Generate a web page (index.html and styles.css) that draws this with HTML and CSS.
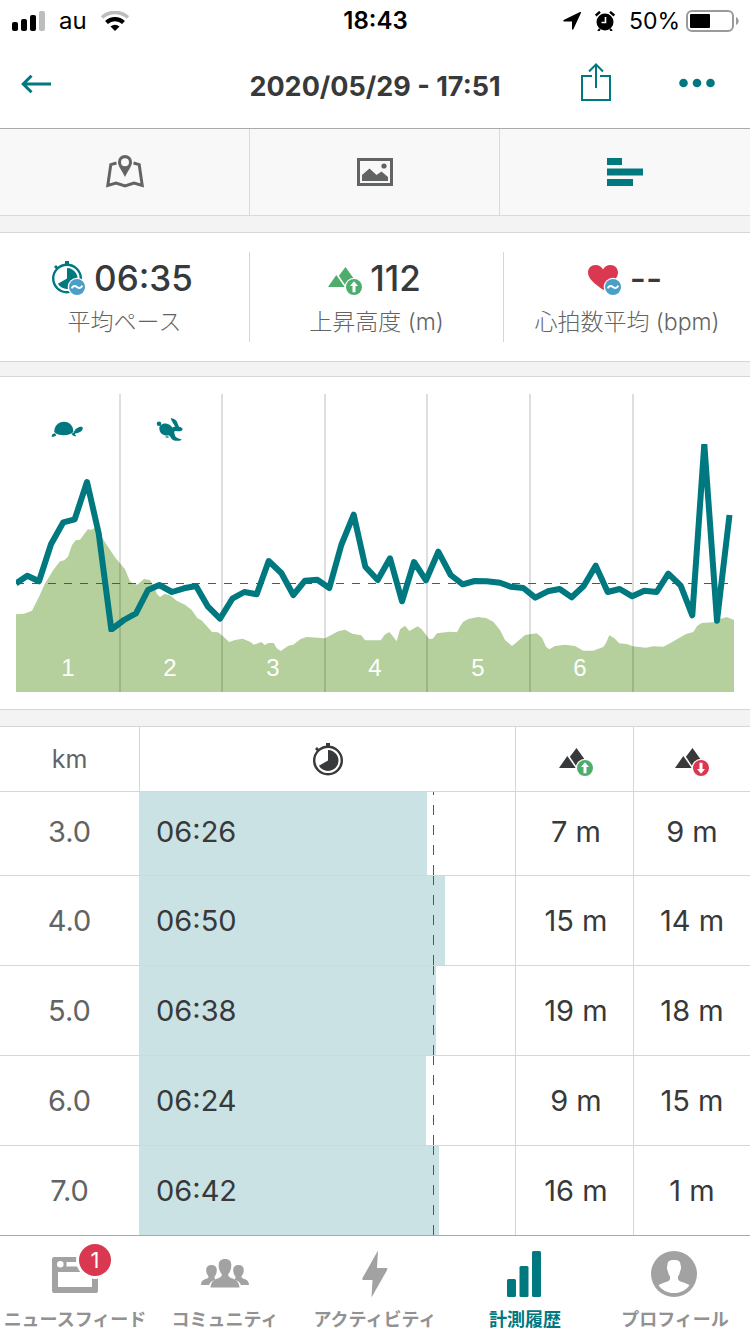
FILE: index.html
```
<!DOCTYPE html>
<html lang="ja">
  <head>
    <meta charset="UTF-8" />
    <meta name="viewport" content="width=device-width, initial-scale=1.0" />
    <title>計測履歴</title>
    <link rel="stylesheet" href="styles.css">
  </head>
  <body>
    <!-- shared icons -->
    <svg class="sprite" aria-hidden="true">
      <symbol id="stopwatch" viewBox="0 0 34 34">
        <path d="M13 0h4v4h-4zM2 6l2-2 3 3-2 2z" fill="currentColor" />
        <circle cx="15" cy="17.500" r="13.800" fill="none" stroke="currentColor" stroke-width="2.400" />
        <path d="M15 17.500V7A10.500 10.500 0 1 1 5.900 22.750z" fill="currentColor" />
      </symbol>
      <symbol id="mountains" viewBox="0 0 34 34">
        <path d="M0 26L8.300 14l8.400 12zM17.500 6l-6.600 8.800L18.500 26l9-6z" fill="currentColor" />
      </symbol>
      <symbol id="badge-avg" viewBox="0 0 34 34">
        <circle cx="25" cy="26" r="9.300" fill="#fff" />
        <circle cx="25" cy="26" r="8" fill="#4a9fc9" />
        <path d="M19.700 27.300c1.500-3.200 3.700-2.700 5.300-1.300s3.800 1.900 5.300-1.300" fill="none" stroke="#fff" stroke-width="2" />
      </symbol>
      <symbol id="badge-up" viewBox="0 0 34 34">
        <circle cx="26" cy="26" r="9.300" fill="#fff" />
        <circle cx="26" cy="26" r="8" fill="#4fad6c" />
        <path d="M26 20.300l4 4.700h-2.500v6.300h-3V25H22z" fill="#fff" />
      </symbol>
      <symbol id="badge-down" viewBox="0 0 34 34">
        <circle cx="26" cy="26" r="9.300" fill="#fff" />
        <circle cx="26" cy="26" r="8" fill="#da3850" />
        <path d="M26 31.700l4-4.700h-2.500v-6.300h-3V27H22z" fill="#fff" />
      </symbol>
    </svg>

    <div class="status-bar">
      <div class="status-left">
        <svg width="33" height="20" viewBox="0 0 33 20" aria-hidden="true">
          <rect x="0" y="11" width="6" height="9" rx="2" />
          <rect x="9" y="8" width="6" height="12" rx="2" />
          <rect x="18" y="4" width="6" height="16" rx="2" />
          <rect x="27" y="0" width="6" height="20" rx="2" fill="#bdbdbd" />
        </svg>
        <span>au</span>
        <svg width="28" height="20" viewBox="0 0 28 20" aria-hidden="true">
          <path d="M1 6.500A19 19 0 0 1 27 6.500" fill="none" stroke="#bdbdbd" stroke-width="3.600" />
          <path d="M5.500 11.500a12.500 12.500 0 0 1 17 0" fill="none" stroke="#000" stroke-width="4.200" />
          <path d="M14 20l-4.500-4.500a6.500 6.500 0 0 1 9 0z" />
        </svg>
      </div>
      <div class="status-time">18:43</div>
      <div class="status-right">
        <svg width="18" height="18" viewBox="0 0 18 18" aria-hidden="true">
          <path d="M17.300.700L1 8.700h8.700v8.300z" stroke="#000" stroke-width="1.400" stroke-linejoin="round" />
        </svg>
        <svg width="20" height="20" viewBox="0 0 20 20" aria-hidden="true">
          <circle cx="10" cy="11" r="8.500" />
          <path d="M.7 4.500L5 .800M19.300 4.500L15 .800" stroke="#000" stroke-width="2.400" />
          <path d="M15 18l2 2M5 18l-2 2" stroke="#000" stroke-width="2" />
          <path d="M10.500 6v5.500H6.500" fill="none" stroke="#fff" stroke-width="1.600" />
        </svg>
        <span class="battery-level">50%</span>
        <svg width="53" height="22" viewBox="0 0 53 22" aria-hidden="true">
          <rect x="1" y="1" width="46" height="20" rx="5" fill="none" stroke="#9a9a9a" stroke-width="2" />
          <rect x="4" y="4" width="20" height="14" rx="1" />
          <path d="M50 7c3.500 1.500 3.500 6.500 0 8z" fill="#9a9a9a" />
        </svg>
      </div>
    </div>

    <header class="header">
      <button class="icon-button" aria-label="戻る">
        <svg width="32" height="20" viewBox="0 0 32 20">
          <path d="M30 10H3M10.500 1.700L2.200 10l8.300 8.300" fill="none" stroke="currentColor" stroke-width="3" />
        </svg>
      </button>
      <h1>2020/05/29 - 17:51</h1>
      <div class="header-actions">
        <button class="icon-button" aria-label="共有">
          <svg width="30" height="38" viewBox="0 0 30 38">
            <path d="M11 13H1v24h28V13H19M15 25V2M8 8.500L15 1.500l7 7" fill="none" stroke="currentColor" stroke-width="2" />
          </svg>
        </button>
        <button class="icon-button" aria-label="メニュー">
          <svg width="36" height="38" viewBox="0 0 36 38">
            <g fill="currentColor">
              <circle cx="4.500" cy="20" r="4.300" />
              <circle cx="18" cy="20" r="4.300" />
              <circle cx="31.500" cy="20" r="4.300" />
            </g>
          </svg>
        </button>
      </div>
    </header>

    <nav class="view-tabs">
      <button class="view-tab" aria-label="地図">
        <svg width="38" height="34" viewBox="0 0 38 34">
          <path d="M10.500 8L4.800 9.600 1.800 30.400 10 28l9 3 9-3 8.200 2.400-3-20.800L27.500 8" fill="none" stroke="currentColor" stroke-width="3" />
          <path d="M19 0a7 7 0 0 1 7 7.200C26 11 22 15.500 19 22 16 15.500 12 11 12 7.200A7 7 0 0 1 19 0zm0 3.300a4 4 0 1 0 0 8 4 4 0 0 0 0-8z" fill="currentColor" fill-rule="evenodd" />
        </svg>
      </button>
      <button class="view-tab" aria-label="写真">
        <svg width="36" height="28" viewBox="0 0 36 28">
          <path d="M0 0h36v28H0zM3 3v22h30V3z" fill="currentColor" fill-rule="evenodd" />
          <path d="M5 23v-6l7.500-6.500 7 6.500 5-3.500 6.500 5.500v4z" fill="currentColor" />
          <circle cx="27" cy="8" r="2.600" fill="currentColor" />
        </svg>
      </button>
      <button class="view-tab active" aria-label="グラフ">
        <svg width="36" height="28" viewBox="0 0 36 28">
          <path d="M0 0h15v7H0zM0 10.500h36v7H0zM0 21h26v7H0z" fill="currentColor" />
        </svg>
      </button>
    </nav>

    <main>
      <section class="panel stats">
        <div class="stat">
          <div class="stat-value">
            <svg class="stat-icon teal" aria-hidden="true"><use href="#stopwatch" /><use href="#badge-avg" /></svg>
            06:35
          </div>
          <div class="stat-label">平均ペース</div>
        </div>
        <div class="stat">
          <div class="stat-value">
            <svg class="stat-icon green" aria-hidden="true"><use href="#mountains" /><use href="#badge-up" /></svg>
            112
          </div>
          <div class="stat-label">上昇高度 (m)</div>
        </div>
        <div class="stat">
          <div class="stat-value">
            <svg class="stat-icon" viewBox="0 0 34 34" aria-hidden="true">
              <path d="M15.500 29C6 22.500 0 17.500 0 11.500 0 7 3.300 4 7.500 4c3.500 0 6.300 1.800 7.500 4.500C16.200 5.800 19 4 22.500 4 26.700 4 30 7 30 11.500c0 6-6 11-14.500 17.500z" fill="#da3850" />
              <use href="#badge-avg" />
            </svg>
            --
          </div>
          <div class="stat-label">心拍数平均 (bpm)</div>
        </div>
      </section>

      <section class="panel chart">
        <svg viewBox="16 394 718 298" role="img" aria-label="ペースと高度">
          <clipPath id="plot"><rect x="16" y="444" width="718" height="188" /></clipPath>
          <path class="elevation" d="M16 692V614.300L24 613.700 32 610.700 39 596.700 44.700 584 53.300 570 60 561.300 64.300 560.300 68 556.700 72 545 75.700 540.300 80 539.700 88 529 90.700 530 94.700 528 98.700 531.700 105.300 542.700 115 557.300 125 569.300 130 581.300 133 583.500 137.300 584.700 144 579 150 580 154 586.700 157 594 160 597 165 593.700 170.700 595.700 176.700 600.700 185 604.700 191.700 610 197.300 618 202 620.700 212 632 218 632.300 222.700 636 229.300 642 235 640 242.700 638.700 250 641.700 254 644.700 261.300 642 264.700 645 268.700 643 273.700 643 276.700 648.300 280.700 651 288.300 645.700 293.300 644.700 300.700 639 306.700 637 325 638.300 338.300 631.300 345 629.700 352.300 633.700 361.300 635.300 365 640.300 380.700 640.300 384.700 634.700 389.300 632 393.300 636.700 396.700 641.300 400 629.300 405 625.700 409.300 631 417.700 626.300 421.700 629.300 429.300 639 432.700 638.700 437 633.300 450 631.700 457 632.300 460 626.500 463.300 621.700 468.300 619 477.700 617 486 618 493.300 621.700 500 630 505 640 512 646 516 642.700 525 635 536.700 633.300 542 637.700 546 646.700 549.300 649.300 555 646 565 644.700 575 646 583.300 650.700 593.300 650.700 603.300 647 606 643 609.300 635.300 614 638 619.300 643.300 627.700 644.300 632.700 646.300 645.700 647.700 653.300 646.300 663.300 646.700 670 643.300 686 634 693.300 632 697.300 625.700 701.700 623 716.700 622 720 619 726.700 617 734 620V692z" />
          <path class="split-lines" d="M120 394V692M222 394V692M325 394V692M427 394V692M530 394V692M633 394V692" />
          <path class="average" d="M16 583.500H728" />
          <polyline class="pace" clip-path="url(#plot)" points="16,583.500 27.300,575.700 39,581.300 51,544.300 63.300,522.300 74.700,519.300 87,482 98.700,533.300 111.300,629.500 124,620 136,613.300 148,590 159.300,585 172,592 184,588.300 196,586 208,606.700 220,618.700 232.300,598.700 244.300,592 256.700,594.300 268.700,561 281.300,573 293.300,595 305,580.700 317.300,579.700 329.300,588 341.300,545 353.700,514.700 365.300,566.700 377.700,580 390,558.300 402,601.300 414,562 426,580.300 438.300,551.700 450.700,575 462.700,584.300 474.700,581 486.700,581.300 500,582.700 510.700,586.700 523.300,588 535.300,597.700 547.700,591.300 559.700,589 571.700,597.300 583.700,586 595.700,565.700 607.700,592 619.700,589 632.300,596.300 644.300,590.700 656.700,592 668.300,573.700 680.700,585.700 692.300,615.300 704.300,444 717,620.700 729.500,515" />
          <!-- slowest split -->
          <g class="animal">
            <path d="M54.300 432c-.3-5.500 4-10.300 9.700-10.300s9.500 4.500 9.300 10.300c-2 2-5 3.200-9.300 3.200s-7.700-1-9.700-3.200z" />
            <path d="M73.500 432.700c1-2 2.200-4 3.800-4.700 2-1 3.700-1.600 5-1 .8 1.200.4 2.200 0 3-1 1.500-2 2-3 2.300-1.200.6-2.200.8-3.300 1-.9.300-1 .6-1.300 1l1.600 1.800c-1.500.5-2.500-.2-3.600-.8l-1.400-1.600zM51.700 436.700c-.2-1.700.7-3.100 3.300-3.400l1.300 2c-.9 1-2.800 1.900-4.600 1.400z" />
          </g>
          <!-- fastest split -->
          <g class="animal">
            <circle cx="159" cy="423.700" r="2.300" />
            <path d="M159.300 428c.4-3.500 4.200-5 7.700-4.300 4 1 5.300 3.800 6.600 6.500 1.200 2.600.8 5.300 2 6.500 1.500 1.500 4.500 2 6.200 2.800l-2 1.200c-2.500.2-5 .2-6.800-.7-1.700-1.200-2.800-3.500-4-4.700-4.500.8-9.700-1-9.700-7.300z" />
            <path d="M170.700 418c2.500.3 4.500 1.500 6 3.300l2.300 5.400c2 .3 3.500 1.300 3.700 2.600-.5 1.300-1.500 1.900-2.700 2-1.800.2-3.500-.5-5-.3l-1.700 1.700-1.700-4.900 3.500-1.300c-1.300-2.500-3.800-5.500-4.400-8.500zM165 437c1-1 3-1 4.200 0-1 1-3 1-4.200 0z" />
          </g>
          <g class="split-numbers">
            <text x="68" y="676">1</text>
            <text x="170" y="676">2</text>
            <text x="273" y="676">3</text>
            <text x="375" y="676">4</text>
            <text x="478" y="676">5</text>
            <text x="580" y="676">6</text>
          </g>
        </svg>
      </section>

      <table class="splits">
        <colgroup>
          <col class="col-distance" />
          <col />
          <col class="col-up" />
          <col class="col-down" />
        </colgroup>
        <thead>
          <tr>
            <th>km</th>
            <th aria-label="ペース"><svg class="stat-icon" viewBox="-2 -1 34 34" aria-hidden="true"><use href="#stopwatch" width="34" height="34" /></svg></th>
            <th aria-label="上昇"><svg class="stat-icon" aria-hidden="true"><use href="#mountains" /><use href="#badge-up" /></svg></th>
            <th aria-label="下降"><svg class="stat-icon" aria-hidden="true"><use href="#mountains" /><use href="#badge-down" /></svg></th>
          </tr>
        </thead>
        <tbody>
          <tr>
            <td>3.0</td>
            <td class="pace-cell"><div class="bar" style="width: 76.6%">06:26</div></td>
            <td>7 m</td>
            <td>9 m</td>
          </tr>
          <tr>
            <td>4.0</td>
            <td class="pace-cell"><div class="bar" style="width: 81.4%">06:50</div></td>
            <td>15 m</td>
            <td>14 m</td>
          </tr>
          <tr>
            <td>5.0</td>
            <td class="pace-cell"><div class="bar" style="width: 79%">06:38</div></td>
            <td>19 m</td>
            <td>18 m</td>
          </tr>
          <tr>
            <td>6.0</td>
            <td class="pace-cell"><div class="bar" style="width: 76.2%">06:24</div></td>
            <td>9 m</td>
            <td>15 m</td>
          </tr>
          <tr>
            <td>7.0</td>
            <td class="pace-cell"><div class="bar" style="width: 79.8%">06:42</div></td>
            <td>16 m</td>
            <td>1 m</td>
          </tr>
        </tbody>
      </table>
    </main>

    <nav class="tab-bar">
      <a href="#feed">
        <span class="tab-icon">
          <svg width="48" height="48" viewBox="0 0 48 48" aria-hidden="true">
            <path d="M3 7h42a2 2 0 0 1 2 2v32a2 2 0 0 1-2 2H3a2 2 0 0 1-2-2V9a2 2 0 0 1 2-2zm4 15v15h34V22zM9.300 11a3.300 3.300 0 1 0 0 6.600 3.300 3.300 0 0 0 0-6.600zM15.500 12v4.500H30V12z" fill="currentColor" fill-rule="evenodd" />
            <circle cx="44" cy="10" r="19" fill="#fff" />
          </svg>
          <span class="count">1</span>
        </span>
        ニュースフィード
      </a>
      <a href="#community">
        <span class="tab-icon">
          <svg width="48" height="48" viewBox="0 0 48 48" aria-hidden="true">
            <path d="M24 9c4.200 0 6.300 2.200 6.300 6 0 3.500-1 7-3 9-.4 2 .5 3 2.700 4 4 1.300 8 3 8.500 9.500h-29C10 31 14 29.300 18 28c2.200-1 3.100-2 2.700-4-2-2-3-5.500-3-9 0-3.800 2.100-6 6.300-6z" fill="currentColor" />
            <path d="M10.500 15c3.300 0 5.300 1.700 5.300 5 0 2.500-.8 5-2.200 6.500-.3 1.500 0 2.500 1.200 3-3.500 1.200-5.500 2.500-6.800 5.500H0c.3-4.500 2.500-5.300 5.500-6.300 2-.7 2.200-1.500 1.900-2.500C6 24.500 5.200 22.500 5.200 20c0-3.300 2-5 5.300-5zM37.500 15c-3.300 0-5.300 1.700-5.300 5 0 2.500.8 5 2.200 6.500.3 1.500 0 2.500-1.200 3 3.500 1.200 5.500 2.500 6.800 5.500h8c-.3-4.500-2.500-5.300-5.500-6.300-2-.7-2.200-1.500-1.900-2.500 1.400-1.700 2.200-3.700 2.200-6.200 0-3.300-2-5-5.300-5z" fill="currentColor" />
          </svg>
        </span>
        コミュニティ
      </a>
      <a href="#activity">
        <span class="tab-icon">
          <svg width="48" height="48" viewBox="0 0 48 48" aria-hidden="true">
            <path d="M27 .500L11.500 28c-.6 1.300 0 2 1.200 2H21.500L20.500 47.500 36.200 19.800c.5-1 0-1.800-1.200-1.800h-9z" fill="currentColor" />
          </svg>
        </span>
        アクティビティ
      </a>
      <a href="#history" class="active">
        <span class="tab-icon">
          <svg width="48" height="48" viewBox="0 0 48 48" aria-hidden="true">
            <g fill="currentColor">
              <rect x="6" y="29" width="9" height="18" rx="1.500" />
              <rect x="18.500" y="16" width="9" height="31" rx="1.500" />
              <rect x="31" y="1" width="9" height="46" rx="1.500" />
            </g>
          </svg>
        </span>
        計測履歴
      </a>
      <a href="#profile">
        <span class="tab-icon">
          <svg width="48" height="48" viewBox="0 0 48 48" aria-hidden="true">
            <circle cx="23" cy="24" r="23" fill="currentColor" />
            <path d="M23 10c5 0 6.500 1.500 6.500 5 1 2 .5 5-.5 6.500-.3 2-1 3.500-2 5-.4 3 .5 4.300 3 5.200 4 1.200 6.500 2 8.500 3.500C35 40 30 43 23 43S11 40 7.500 35.200c2-1.500 4.500-2.300 8.500-3.500 2.500-.9 3.400-2.200 3-5.200-1-1.500-1.700-3-2-5-1-1.500-1.500-4.500-.5-6.500 0-3.500 1.500-5 6.500-5z" fill="#fff" />
          </svg>
        </span>
        プロフィール
      </a>
    </nav>
  </body>
</html>
```
FILE: styles.css
```
* {
  box-sizing: border-box;
}

body {
  margin: 0;
  background-color: #f3f3f3;
  color: #38393a;
  font-family: Inter, "Noto Sans CJK JP", sans-serif;
}

svg {
  display: block;
}

button {
  border: none;
  padding: 0;
  background: none;
  cursor: pointer;
}

.sprite {
  position: absolute;
  width: 0;
  height: 0;
}

/* Status bar */
.status-bar {
  display: grid;
  grid-template-columns: 1fr auto 1fr;
  align-items: center;
  height: 40px;
  padding: 1px 11px 0 12px;
  background-color: #fff;
  color: #000;
  font-size: 24px;
}

.status-left,
.status-right {
  display: flex;
  align-items: center;
  gap: 14px;
}

.status-right {
  justify-content: flex-end;
}

.status-right svg:last-child {
  margin-left: -8px;
}

.status-time {
  font-weight: 600;
}

.battery-level {
  font-size: 23px;
}

/* Header */
.header {
  display: grid;
  grid-template-columns: minmax(0, 1fr) auto minmax(0, 1fr);
  align-items: center;
  height: 89px;
  padding: 0 21px;
  border-bottom: 1px solid #aaa;
  background-color: #fff;
}

.header h1 {
  margin: 0;
  padding-top: 4px;
  font-size: 27px;
  font-weight: 700;
}

.icon-button {
  justify-self: start;
  color: #007880;
}

.header-actions {
  display: flex;
  justify-content: flex-end;
  gap: 68px;
  padding: 0 14px 4px 0;
}

/* Map / photos / charts */
.view-tabs {
  display: grid;
  grid-template-columns: repeat(3, 1fr);
  height: 87px;
  border-bottom: 1px solid #d9d9d9;
  background-color: #f8f8f8;
}

.view-tab {
  display: flex;
  align-items: center;
  justify-content: center;
  border-right: 1px solid #d9d9d9;
  color: #626463;
}

.view-tab:last-child {
  border-right: none;
}

.view-tab.active {
  color: #007880;
}

.panel {
  border-top: 1px solid #d5d7d7;
  border-bottom: 1px solid #d5d7d7;
  background-color: #fff;
}

/* Stats */
.stats {
  display: grid;
  grid-template-columns: 250fr 254fr 246fr;
  margin: 16px 0 14px;
  padding: 19px 0;
}

.stat {
  display: flex;
  flex-direction: column;
  align-items: center;
  height: 90px;
  border-right: 1px solid #d5d7d7;
}

.stat:last-child {
  border-right: none;
}

.stat-value {
  display: flex;
  align-items: center;
  gap: 8px;
  padding-right: 4px;
  line-height: 52px;
  font-size: 35px;
  font-weight: 500;
}

.stat-icon {
  width: 34px;
  height: 34px;
}

.stat-label {
  line-height: 36px;
  color: #626463;
  font-size: 23px;
  font-weight: 300;
}

.teal {
  color: #007880;
}

.green {
  color: #4fad6c;
}

/* Chart */
.chart {
  margin-bottom: 16px;
  padding: 17px 16px;
}

.elevation {
  fill: #b5d09c;
}

.split-lines {
  stroke: #000;
  stroke-opacity: 0.13;
  stroke-width: 2;
}

.average {
  stroke: #007880;
  stroke-dasharray: 8 8;
}

.pace {
  fill: none;
  stroke: #007880;
  stroke-width: 6;
  stroke-linejoin: round;
}

.animal {
  fill: #007880;
}

.split-numbers {
  fill: #fff;
  font-family: "Liberation Sans", sans-serif;
  font-size: 24px;
  text-anchor: middle;
}

/* Splits */
.splits {
  width: 100%;
  table-layout: fixed;
  border-collapse: separate;
  border-spacing: 0;
  border-top: 1px solid #d5d7d7;
  background-color: #fff;
}

.col-distance {
  width: 139px;
}

.col-up {
  width: 118px;
}

.col-down {
  width: 116px;
}

th {
  height: 65px;
  padding: 0;
  border-bottom: 1px solid #d5d7d7;
  color: #38393a;
}

th:first-child {
  color: #626463;
  font-size: 25px;
  font-weight: 400;
}

th:nth-child(2) {
  border-left: 1px solid #d5d7d7;
}

th .stat-icon {
  margin: 0 auto;
}

td {
  height: 90px;
  padding: 0;
  border-bottom: 1px solid #d5d7d7;
  font-size: 29px;
  text-align: center;
}

td:first-child {
  color: #626463;
}

th:nth-child(2),
th:nth-child(3),
td:nth-child(2),
td:nth-child(3) {
  border-right: 1px solid #d5d7d7;
}

th:nth-child(3),
td:nth-child(3) {
  padding-left: 3px;
}

.pace-cell {
  position: relative;
}

.bar {
  height: 89px;
  padding-left: 17px;
  background-color: #cbe2e4;
  line-height: 90px;
  text-align: left;
}

/* average pace marker */
.pace-cell::after {
  content: "";
  position: absolute;
  top: 0;
  bottom: 0;
  left: 78.3%;
  width: 1px;
  background: repeating-linear-gradient(to top, #007880 0 10px, transparent 10px 20px);
}

/* first visible row is partly scrolled under the header */
tbody tr:first-child td {
  height: 84px;
  padding-bottom: 5px;
}

tbody tr:first-child .pace-cell {
  padding-bottom: 0;
}

tbody tr:first-child .bar {
  height: 83px;
  line-height: 80px;
}

tbody tr:last-child td {
  height: 89px;
  border-bottom: none;
}

/* Bottom navigation */
.tab-bar {
  position: sticky;
  bottom: 0;
  display: grid;
  grid-template-columns: repeat(5, 1fr);
  height: 99px;
  border-top: 1px solid #aaa;
  background-color: #fff;
}

.tab-bar a {
  display: flex;
  flex-direction: column;
  align-items: center;
  padding-top: 14px;
  color: #929292;
  font-size: 18px;
  font-weight: 700;
  line-height: 24px;
  text-decoration: none;
  white-space: nowrap;
}

.tab-bar a.active {
  color: #007880;
}

.tab-icon {
  position: relative;
  margin-bottom: 10px;
  color: #a2a2a2;
}

.active .tab-icon {
  color: #007880;
}

.count {
  position: absolute;
  top: -6px;
  left: 28px;
  width: 32px;
  height: 32px;
  border-radius: 50%;
  background-color: #da3850;
  color: #fff;
  font-size: 22px;
  font-weight: 400;
  line-height: 32px;
  text-align: center;
}
```
